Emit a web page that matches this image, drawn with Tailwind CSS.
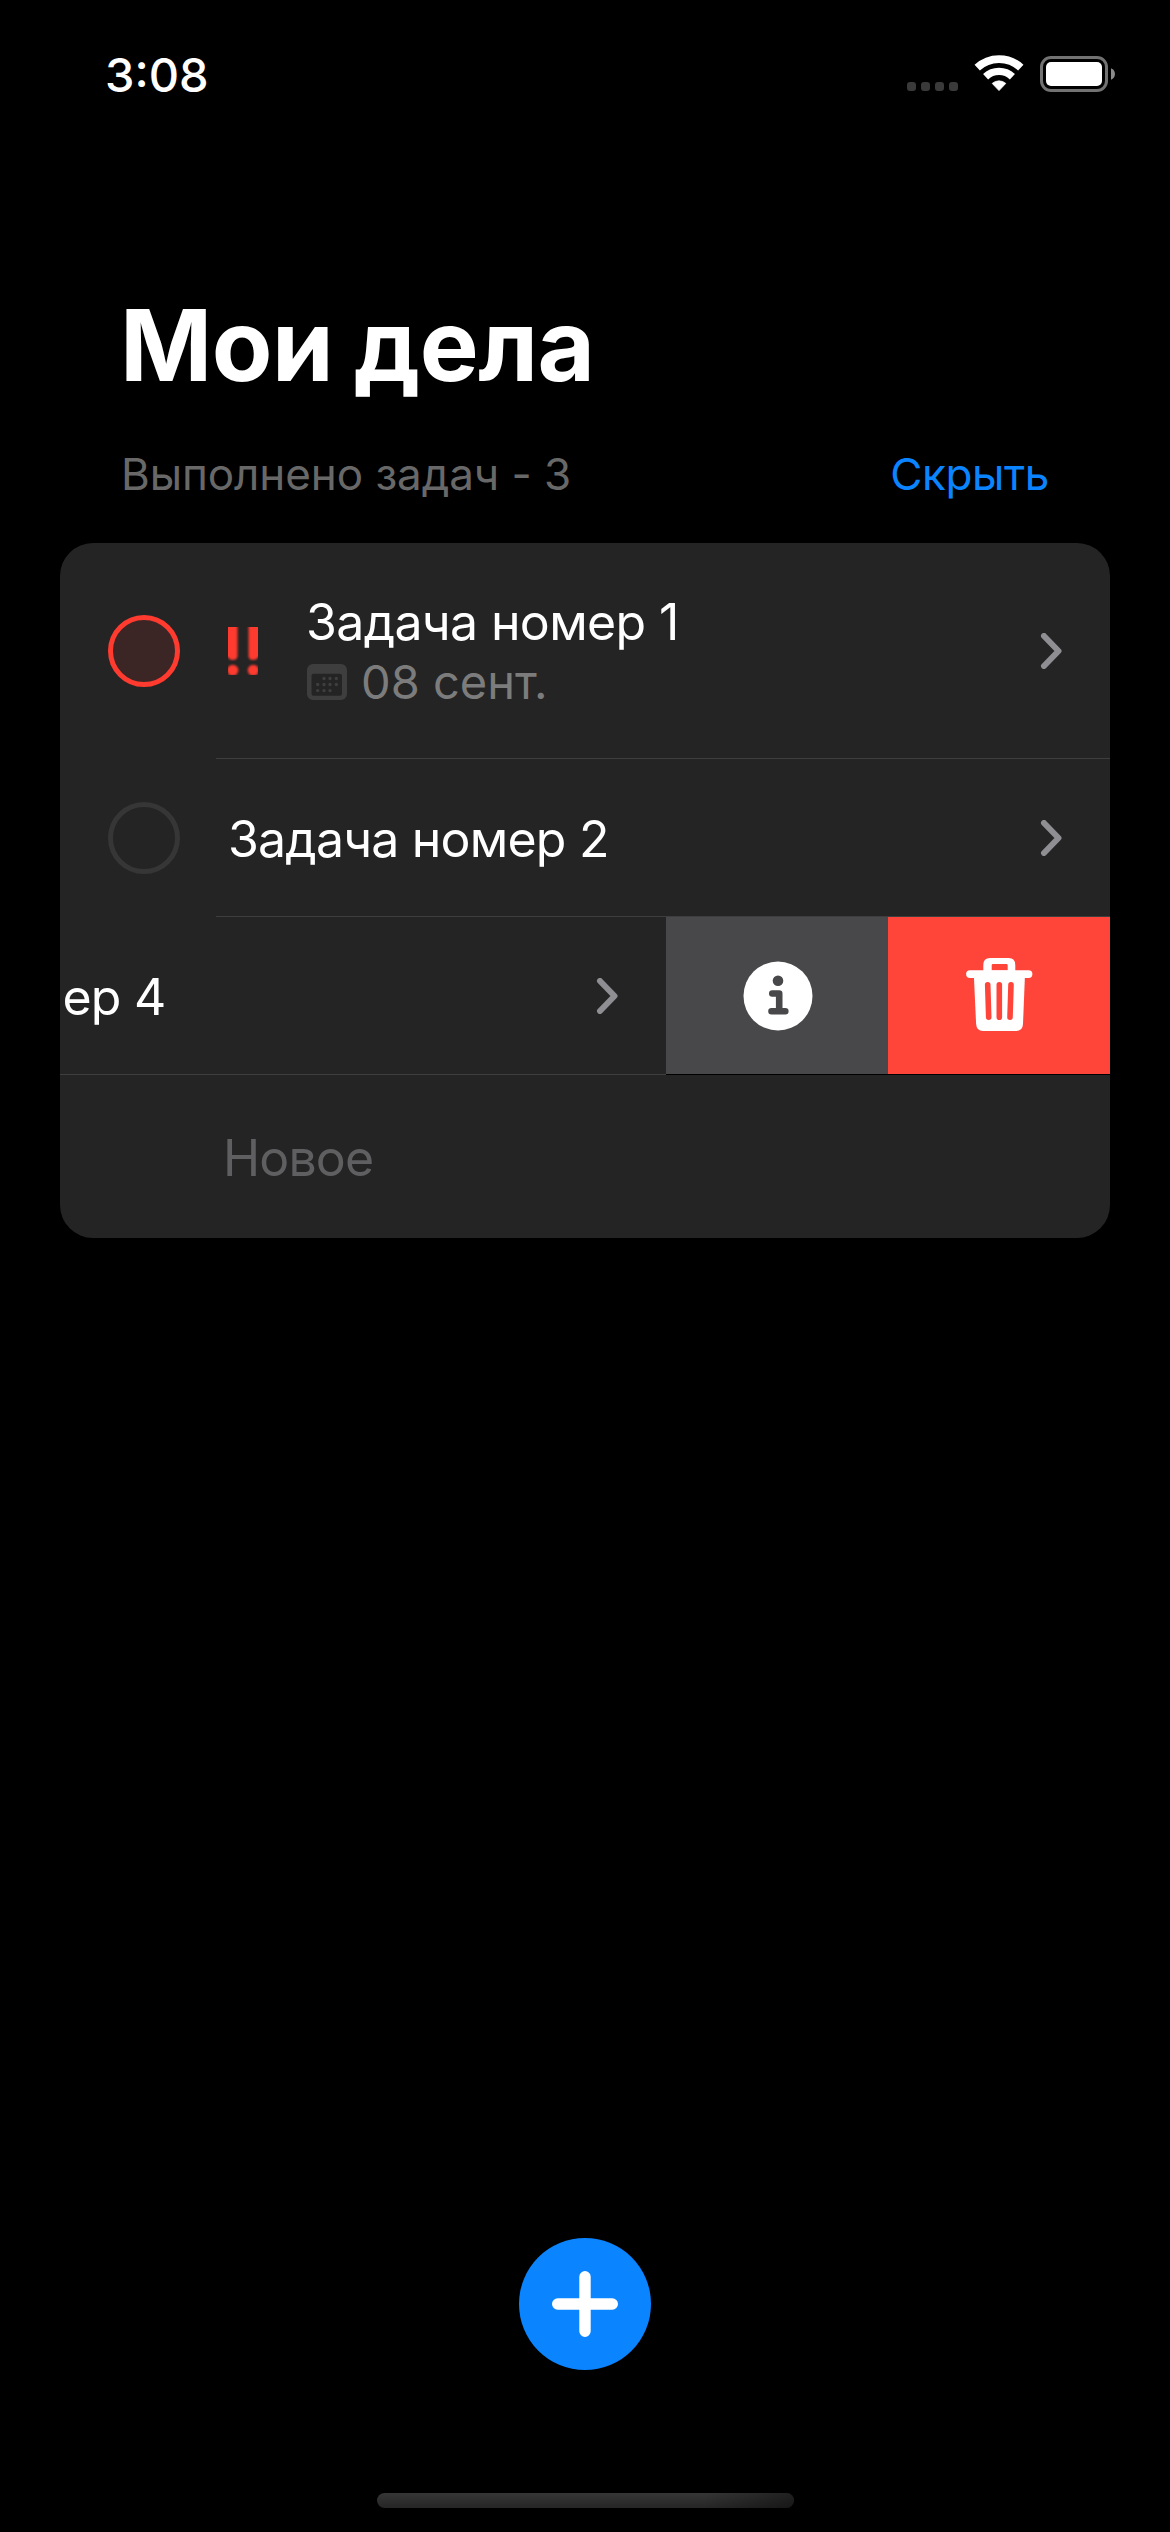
<!DOCTYPE html>
<html lang="ru">
<head>
<meta charset="utf-8">
<title>Мои дела</title>
<script src="https://cdn.jsdelivr.net/npm/@tailwindcss/browser@4"></script>
</head>
<body class="flex h-[2532px] w-[1170px] flex-col overflow-hidden bg-black font-['Inter',sans-serif] text-white">

  <!-- Status bar -->
  <header class="flex h-[148px] items-center justify-between pr-[54px] pl-[105px]">
    <div class="text-[47px] leading-none font-medium">3:08</div>
    <div class="flex items-center">
      <div class="mt-[25px] flex gap-[5px]">
        <i class="size-[9px] rounded-[3px] bg-[#3a3a3a]"></i>
        <i class="size-[9px] rounded-[3px] bg-[#3a3a3a]"></i>
        <i class="size-[9px] rounded-[3px] bg-[#3a3a3a]"></i>
        <i class="size-[9px] rounded-[3px] bg-[#3a3a3a]"></i>
      </div>
      <svg class="mr-[16px] ml-[16px] h-[38px] w-[50px]" viewBox="0 0 50 38" fill="none" stroke="#fff">
        <path d="M3.2 12.6A32 32 0 0 1 46.8 12.6" stroke-width="7.8"/>
        <path d="M11.6 21.7A19.6 19.6 0 0 1 38.4 21.7" stroke-width="7.4"/>
        <path d="M25 35.6L18.2 28.4A10.4 10.4 0 0 1 31.8 28.4Z" fill="#fff" stroke-width=".8" stroke-linejoin="round"/>
      </svg>
      <svg class="h-[36px] w-[76px]" viewBox="0 0 76 36">
        <rect x="1.5" y="1.5" width="65" height="33" rx="9.5" fill="none" stroke="#727272" stroke-width="3"/>
        <rect x="6" y="6" width="56" height="24" rx="5" fill="#fff"/>
        <path d="M71 12.3C73.500 13.300 75 15.500 75 18S73.500 22.700 71 23.700Z" fill="#8a8a8a"/>
      </svg>
    </div>
  </header>

  <h1 class="mt-[137px] pl-[120px] text-[99px] leading-[120px] font-bold tracking-[-0.5px] [word-spacing:-2px]">Мои дела</h1>

  <div class="mt-[39px] flex items-center justify-between pr-[121px] pl-[121px] text-[44px] leading-[60px]">
    <span class="tracking-[-0.08px] text-[#686868]">Выполнено задач - 3</span>
    <button class="tracking-[-0.4px] text-[#0a84ff]">Скрыть</button>
  </div>

  <!-- Task list -->
  <main class="mx-[60px] mt-[39px] flex h-[695px] flex-col overflow-hidden rounded-[33px] bg-[#242424]">
    <section class="flex h-[215px] items-center pr-[48px] pl-[48px]">
      <div class="size-[72px] rounded-full border-[5px] border-[#ff3b30] bg-[#3b2625]"></div>
      <div class="ml-[48px] h-[48px] w-[30px] overflow-hidden">
        <svg class="size-full overflow-visible blur-[0.8px]" viewBox="0 0 30 48" fill="#ff3b30">
          <path d="M-2-2H9.500V29Q9.300 33 5 33Q.8 33 0 30L-2 30Z"/>
          <path d="M32-2H20.500V29Q20.700 33 25 33Q29.200 33 30 30L32 30Z"/>
          <circle cx="4.700" cy="43.300" r="5.600"/>
          <circle cx="25.300" cy="43.300" r="5.600"/>
        </svg>
      </div>
      <div class="ml-[48px] flex flex-1 flex-col pt-[2px] leading-[60px]">
        <div class="text-[50px] tracking-[-0.65px]">Задача номер 1</div>
        <div class="flex items-center pl-px text-[47px] text-[#7c7c7c]">
          <svg class="mr-[14px] h-[36px] w-[40px]" viewBox="0 0 40 36" fill="#3e3e3e">
            <path fill-rule="evenodd" d="M6 0H34A6 6 0 0 1 40 6V30A6 6 0 0 1 34 36H6A6 6 0 0 1 0 30V6A6 6 0 0 1 6 0ZM6.500 9.700A2 2 0 0 0 4.500 11.700V29.700A2 2 0 0 0 6.500 31.700H33A2 2 0 0 0 35 29.700V11.700A2 2 0 0 0 33 9.700Z"/>
            <path d="M17 14.500h.01M23 14.500h.01M29.300 14.500h.01M10.700 20.500h.01M17 20.500h.01M23 20.500h.01M29.300 20.500h.01M10.700 26.600h.01M17 26.600h.01M23 26.600h.01" stroke="#3e3e3e" stroke-width="3.400" stroke-linecap="round"/>
          </svg>
          <span>08 сент.</span>
        </div>
      </div>
      <svg class="h-[36px] w-[22px]" viewBox="0 0 22 36" fill="none" stroke="#8e8e93" stroke-width="6" stroke-linecap="round" stroke-linejoin="round"><path d="M4 3L18.500 18L4 33"/></svg>
    </section>
    <div class="ml-[156px] h-px shrink-0 bg-[#3e3e3e]"></div>

    <section class="flex h-[157px] items-center pr-[48px] pl-[48px]">
      <div class="size-[72px] rounded-full border-[5px] border-[#363636]"></div>
      <div class="ml-[48px] flex-1 pt-[2px] text-[50px] leading-[60px] tracking-[-0.8px]">Задача номер 2</div>
      <svg class="h-[36px] w-[22px]" viewBox="0 0 22 36" fill="none" stroke="#8e8e93" stroke-width="6" stroke-linecap="round" stroke-linejoin="round"><path d="M4 3L18.500 18L4 33"/></svg>
    </section>
    <div class="ml-[156px] h-px shrink-0 bg-[#3e3e3e]"></div>

    <!-- Row swiped left, revealing its actions -->
    <section class="flex h-[158px] shrink-0">
      <div class="-ml-[444px] flex w-[1050px] shrink-0 items-center border-b border-[#3e3e3e] pr-[48px] pl-[48px]">
        <div class="size-[72px] rounded-full border-[5px] border-[#363636]"></div>
        <div class="ml-[45px] flex-1 pt-[2px] text-[50px] leading-[60px] tracking-[-0.8px]"><span class="mr-[2px]">Задача ном</span>ер 4</div>
        <svg class="h-[36px] w-[22px]" viewBox="0 0 22 36" fill="none" stroke="#8e8e93" stroke-width="6" stroke-linecap="round" stroke-linejoin="round"><path d="M4 3L18.500 18L4 33"/></svg>
      </div>
      <button class="flex w-[222px] items-center justify-center border-b border-black bg-[#48484a] pl-[2px]">
        <svg class="size-[70px]" viewBox="0 0 70 70">
          <circle cx="35" cy="35" r="34.500" fill="#fff"/>
          <circle cx="35" cy="19.700" r="5.300" fill="#48484a"/>
          <path d="M29.300 32.500H36.200V50.300M28.500 50.300H42.300" fill="none" stroke="#48484a" stroke-width="6.600" stroke-linecap="round" stroke-linejoin="round"/>
        </svg>
      </button>
      <button class="flex w-[222px] items-center justify-center border-b border-black bg-[#ff453a]">
        <svg class="mt-[-3px] h-[74px] w-[68px]" viewBox="0 0 68 74" fill="none">
          <path fill-rule="evenodd" d="M18.300 15V8Q18.300 1 25 1H43.700Q50.300 1 50.300 8V15ZM28 7Q26.700 7 26.700 8.300V13.500H42.700V8.300Q42.700 7 41.400 7Z" fill="#fff"/>
          <path d="M5 17.100H63.500" stroke="#fff" stroke-width="7.800" stroke-linecap="round"/>
          <path d="M8.800 17H60L58 67Q57.700 74 51 74H18Q11.500 74 11.100 67Z" fill="#fff"/>
          <path d="M22.700 27.800L23.700 60.200M34.300 27.800V60.200M46 27.800L45 60.200" stroke="#ff453a" stroke-width="5.600" stroke-linecap="round"/>
        </svg>
      </button>
    </section>

    <section class="flex flex-1 items-center pt-[3px] pl-[163px] text-[50px] leading-[60px] tracking-[-0.84px] text-[#5f5f61]">Новое</section>
  </main>

  <!-- Add button -->
  <button class="mt-auto flex size-[132px] items-center justify-center self-center rounded-full bg-[#0a84ff]">
    <svg class="size-[66px]" viewBox="0 0 66 66" fill="none" stroke="#fff" stroke-width="11.400" stroke-linecap="round"><path d="M33 5.700V60.300M5.700 33H60.300"/></svg>
  </button>

  <!-- Home indicator -->
  <div class="mt-[123px] mb-[24px] h-[15px] w-[417px] self-center overflow-hidden rounded-full bg-linear-to-b from-[#363636] to-[#262626]">
    <div class="ml-auto h-full w-[90px] bg-linear-to-r from-transparent to-black/40"></div>
  </div>
</body>
</html>
